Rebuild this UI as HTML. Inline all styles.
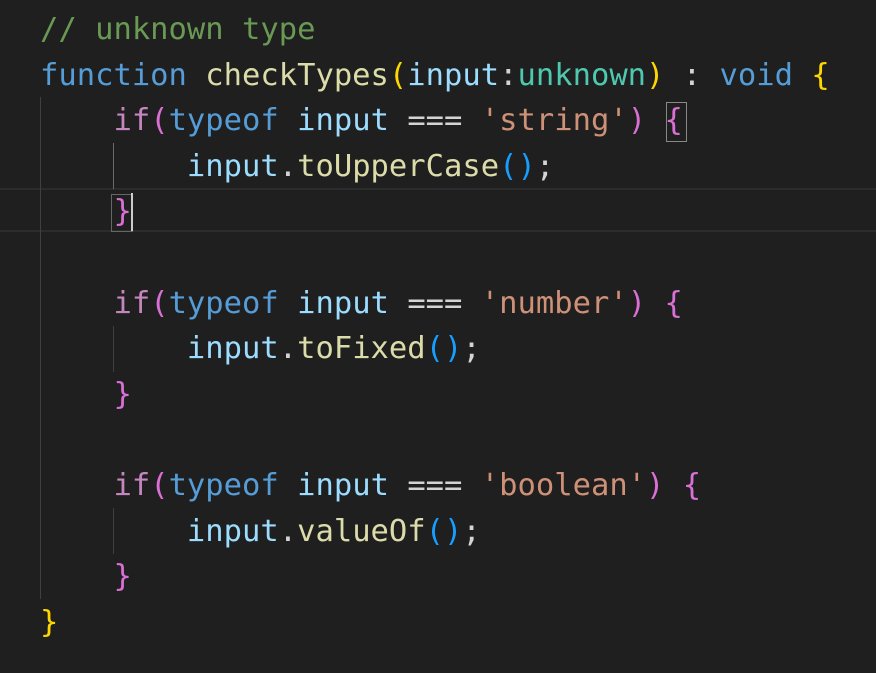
<!DOCTYPE html><html><head><style>
body{margin:0;background:#1f1f1f;width:876px;height:673px;overflow:hidden;position:relative}
.c{position:absolute;left:40px;top:7px;font-family:"DejaVu Sans Mono","Liberation Mono",monospace;font-size:30.5px;line-height:45.6px;white-space:pre;color:#d4d4d4}
.cm{color:#6a9955}.k{color:#569cd6}.f{color:#dcdcaa}.v{color:#9cdcfe}.t{color:#4ec9b0}.p{color:#c586c0}.s{color:#ce9178}.y{color:#ffd700}.m{color:#da70d6}.b{color:#179fff}
.g{position:absolute;width:1px;background:#404040}
</style></head><body>
<div style="position:absolute;left:0;top:188px;width:876px;height:44px;border-top:2px solid #2c2c2c;border-bottom:2px solid #2c2c2c;box-sizing:border-box"></div>
<div class="g" style="left:40px;top:97px;height:502px"></div>
<div class="g" style="left:113px;top:143px;height:46px;background:#6a6a6a"></div>
<div class="g" style="left:113px;top:326px;height:46px"></div>
<div class="g" style="left:113px;top:508px;height:46px"></div>
<div style="position:absolute;left:111px;top:194px;width:20px;height:36px;border:1px solid #666"></div>
<div style="position:absolute;left:131px;top:193px;width:2px;height:38px;background:#ccc"></div>
<div style="position:absolute;left:666px;top:102px;width:19px;height:38px;border:1px solid #888"></div>
<div class="c"><span class="cm">// unknown type</span>
<span class="k">function</span> <span class="f">checkTypes</span><span class="y">(</span><span class="v">input</span>:<span class="t">unknown</span><span class="y">)</span> : <span class="k">void</span> <span class="y">{</span>
    <span class="p">if</span><span class="m">(</span><span class="k">typeof</span> <span class="v">input</span> === <span class="s">'string'</span><span class="m">)</span> <span class="m">{</span>
        <span class="v">input</span>.<span class="f">toUpperCase</span><span class="b">()</span>;
    <span class="m">}</span>

    <span class="p">if</span><span class="m">(</span><span class="k">typeof</span> <span class="v">input</span> === <span class="s">'number'</span><span class="m">)</span> <span class="m">{</span>
        <span class="v">input</span>.<span class="f">toFixed</span><span class="b">()</span>;
    <span class="m">}</span>

    <span class="p">if</span><span class="m">(</span><span class="k">typeof</span> <span class="v">input</span> === <span class="s">'boolean'</span><span class="m">)</span> <span class="m">{</span>
        <span class="v">input</span>.<span class="f">valueOf</span><span class="b">()</span>;
    <span class="m">}</span>
<span class="y">}</span></div>
</body></html>
